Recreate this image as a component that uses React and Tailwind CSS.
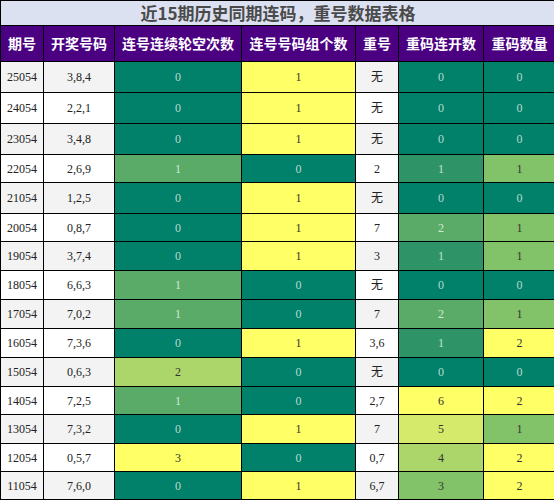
import React from "react";

const DG = "bg-[#01806a] text-[#b5dccd]";
const G1 = "bg-[#2e9467] text-[#c5e3d2]";
const G2 = "bg-[#5aab67] text-[#d3ead6]";
const G3 = "bg-[#82c36a] text-[#333]";
const G4 = "bg-[#acd66a] text-[#333]";
const G5 = "bg-[#d5e96b] text-[#333]";
const Y = "bg-[#ffff66] text-[#333]";

const c3 = { 0: DG, 1: G2, 2: G4, 3: Y };
const c4 = { 0: DG, 1: Y };
const c6 = { 0: DG, 1: G1, 2: G2, 3: G3, 4: G4, 5: G5, 6: Y };
const c7 = { 0: DG, 1: G3, 2: Y };

const rows = [
  ["25054", "3,8,4", 0, 1, "无", 0, 0, "h-[30px]"],
  ["24054", "2,2,1", 0, 1, "无", 0, 0, "h-[30px]"],
  ["23054", "3,4,8", 0, 1, "无", 0, 0, "h-[30px]"],
  ["22054", "2,6,9", 1, 0, "2", 1, 1, "h-[27px]"],
  ["21054", "1,2,5", 0, 1, "无", 0, 0, "h-[30px]"],
  ["20054", "0,8,7", 0, 1, "7", 2, 1, "h-[27px]"],
  ["19054", "3,7,4", 0, 1, "3", 1, 1, "h-[28px]"],
  ["18054", "6,6,3", 1, 0, "无", 0, 0, "h-[28px]"],
  ["17054", "7,0,2", 1, 0, "7", 2, 1, "h-[28px]"],
  ["16054", "7,3,6", 0, 1, "3,6", 1, 2, "h-[28px]"],
  ["15054", "0,6,3", 2, 0, "无", 0, 0, "h-[28px]"],
  ["14054", "7,2,5", 1, 0, "2,7", 6, 2, "h-[27px]"],
  ["13054", "7,3,2", 0, 1, "7", 5, 1, "h-[28px]"],
  ["12054", "0,5,7", 3, 0, "0,7", 4, 2, "h-[27px]"],
  ["11054", "7,6,0", 0, 1, "6,7", 3, 2, "h-[27px]"],
];

const headers = ["期号", "开奖号码", "连号连续轮空次数", "连号号码组个数", "重号", "重码连开数", "重码数量"];

const serif = "font-['Liberation_Serif','Noto_Sans_CJK_SC',serif]";
const sans = "font-['Noto_Sans_CJK_SC','Noto_Sans',sans-serif]";

export default function App() {
  return (
    <div className="w-[554px] h-[500px] bg-white">
      <div className="grid grid-cols-[42px_70px_126px_113px_42px_84px_71px] gap-px bg-black p-px w-[554px]">
        <div className={`col-span-7 h-[24px] bg-[#dbe1f0] flex items-center justify-center text-[17px] font-bold text-[#4a4a4a] ${sans}`}>
          近15期历史同期连码，重号数据表格
        </div>
        {headers.map((h) => (
          <div key={h} className={`h-[35px] bg-[#4b0082] flex items-center justify-center text-[14px] font-bold text-white whitespace-nowrap ${sans}`}>
            {h}
          </div>
        ))}
        {rows.map((r, i) => {
          const alt = i % 2 === 0 ? "bg-[#f3f3f3]" : "bg-white";
          const cell = `${r[7]} flex items-center justify-center text-[12px] ${serif}`;
          return (
            <React.Fragment key={r[0]}>
              <div className={`${cell} ${alt} text-[#222]`}>{r[0]}</div>
              <div className={`${cell} ${alt} text-[#222]`}>{r[1]}</div>
              <div className={`${cell} ${c3[r[2]]}`}>{r[2]}</div>
              <div className={`${cell} ${c4[r[3]]}`}>{r[3]}</div>
              <div className={`${cell} ${alt} text-[#222]`}>{r[4]}</div>
              <div className={`${cell} ${c6[r[5]]}`}>{r[5]}</div>
              <div className={`${cell} ${c7[r[6]]}`}>{r[6]}</div>
            </React.Fragment>
          );
        })}
      </div>
    </div>
  );
}
